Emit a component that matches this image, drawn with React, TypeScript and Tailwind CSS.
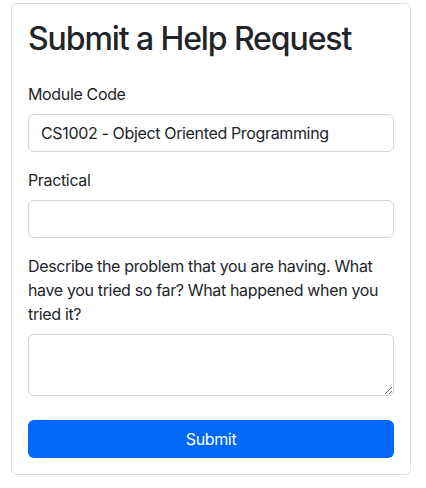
import React from "react";

export default function App() {
  return (
    <div className="w-[426px] h-[488px] bg-white pt-[3px] pl-[11px] text-[#212529] tracking-[-0.35px]" style={{ fontFamily: "Inter, 'Noto Sans', sans-serif" }}>
      <div className="w-[400px] h-[472px] border border-[#dcdee1] rounded-[6px] p-4 flex flex-col">
        <h1 className="text-[32px] leading-[38.4px] font-medium mb-[24px] tracking-[-1.1px]">Submit a Help Request</h1>
        <label className="text-[16px] leading-[24px] mb-2">Module Code</label>
        <input
          readOnly
          value="CS1002 - Object Oriented Programming"
          className="h-[38px] w-full border border-[#ced4da] rounded-[6px] px-3 text-[16px] leading-[24px] text-[#212529] tracking-[-0.35px] outline-none mb-4"
        />
        <label className="text-[16px] leading-[24px] mb-2">Practical</label>
        <input
          readOnly
          className="h-[38px] w-full border border-[#ced4da] rounded-[6px] px-3 text-[16px] outline-none mb-4"
        />
        <label className="text-[16px] leading-[24px] mb-2">
          Describe the problem that you are having. What have you tried so far? What happened when you tried it?
        </label>
        <textarea
          readOnly
          rows={2}
          className="h-[62px] w-full border border-[#ced4da] rounded-[6px] px-3 py-[6px] text-[16px] leading-[24px] outline-none mb-6 resize-y"
        />
        <button className="h-[38px] w-full rounded-[6px] bg-[#0067f9] text-white text-[16px] leading-[24px] tracking-[-0.35px]">
          Submit
        </button>
      </div>
    </div>
  );
}
